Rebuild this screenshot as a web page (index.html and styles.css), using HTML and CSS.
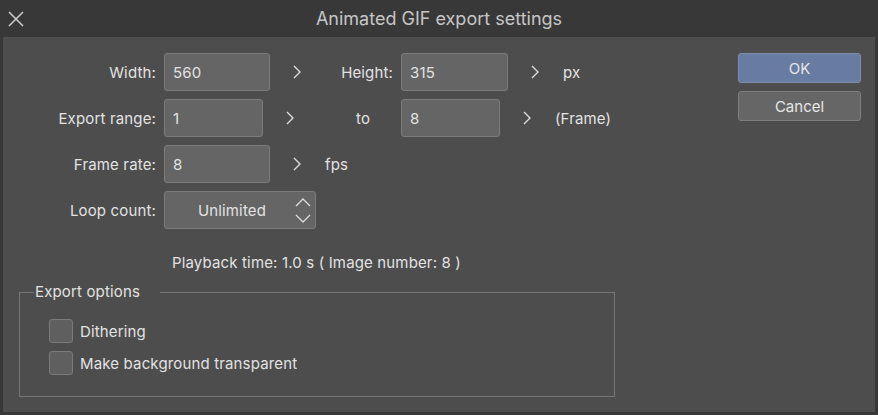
FILE: index.html
```html
<!DOCTYPE html>
<html>
<head>
<meta charset="utf-8">
<link rel="stylesheet" href="styles.css">
</head>
<body>
<div class="dialog">
  <div class="titlebar">
    <button class="close" aria-label="Close">
      <svg width="16" height="16" viewBox="0 0 16 16"><path d="M1 1 L15 15 M15 1 L1 15" stroke="#cfcfcf" stroke-width="1.5" fill="none"/></svg>
    </button>
    <div class="title">Animated GIF export settings</div>
  </div>
  <div class="panel">
    <div class="main">
      <div class="form">
        <div class="lbl">Width:</div>
        <div class="field"><div class="input w106">560</div><svg class="chev" width="8" height="14" viewBox="0 0 8 14"><path d="M1 1 L7 7 L1 13" stroke="#dcdcdc" stroke-width="1.4" fill="none"/></svg></div>
        <div class="lbl">Height:</div>
        <div class="field"><div class="input w107">315</div><svg class="chev" width="8" height="14" viewBox="0 0 8 14"><path d="M1 1 L7 7 L1 13" stroke="#dcdcdc" stroke-width="1.4" fill="none"/></svg><span class="unit">px</span></div>

        <div class="lbl">Export range:</div>
        <div class="field"><div class="input w99">1</div><svg class="chev" width="8" height="14" viewBox="0 0 8 14"><path d="M1 1 L7 7 L1 13" stroke="#dcdcdc" stroke-width="1.4" fill="none"/></svg></div>
        <div class="lbl center">to</div>
        <div class="field"><div class="input w99">8</div><svg class="chev" width="8" height="14" viewBox="0 0 8 14"><path d="M1 1 L7 7 L1 13" stroke="#dcdcdc" stroke-width="1.4" fill="none"/></svg><span class="unit">(Frame)</span></div>

        <div class="lbl">Frame rate:</div>
        <div class="field span3"><div class="input w106">8</div><svg class="chev" width="8" height="14" viewBox="0 0 8 14"><path d="M1 1 L7 7 L1 13" stroke="#dcdcdc" stroke-width="1.4" fill="none"/></svg><span class="unit">fps</span></div>

        <div class="lbl">Loop count:</div>
        <div class="field span3">
          <div class="select">
            <span class="sel-text">Unlimited</span>
            <span class="spin">
              <svg width="16" height="9" viewBox="0 0 16 9"><path d="M1 8 L8 1 L15 8" stroke="#dcdcdc" stroke-width="1.3" fill="none"/></svg>
              <svg width="16" height="9" viewBox="0 0 16 9"><path d="M1 1 L8 8 L15 1" stroke="#dcdcdc" stroke-width="1.3" fill="none"/></svg>
            </span>
          </div>
        </div>
      </div>
      <div class="playback">Playback time: 1.0 s ( Image number: 8 )</div>
      <fieldset class="group">
        <legend>Export options</legend>
        <label class="check"><span class="box"></span>Dithering</label>
        <label class="check"><span class="box"></span>Make background transparent</label>
      </fieldset>
    </div>
    <div class="buttons">
      <button class="btn ok">OK</button>
      <button class="btn">Cancel</button>
    </div>
  </div>
</div>
</body>
</html>
```
FILE: styles.css
```css
* { box-sizing: border-box; }
html, body {
  margin: 0;
  padding: 0;
  background: #383838;
}
body {
  font-family: Inter, "Noto Sans", sans-serif;
  font-size: 15px;
  letter-spacing: 0.15px;
  color: #e2e2e2;
  width: 878px;
  height: 415px;
  overflow: hidden;
}
.dialog {
  display: flex;
  flex-direction: column;
  height: 415px;
  padding: 0 3px 3px 3px;
}
.titlebar {
  height: 37px;
  display: flex;
  align-items: center;
  position: relative;
  margin: 0 -3px;
}
.close {
  background: none;
  border: 0;
  padding: 0;
  margin-left: 8px;
  width: 16px;
  height: 16px;
  display: flex;
}
.title {
  position: absolute;
  left: 0;
  right: 0;
  top: 0;
  line-height: 37px;
  text-align: center;
  font-size: 18px;
  letter-spacing: 0;
  color: #c6c6c6;
  pointer-events: none;
}
.panel {
  flex: 1;
  background: #4d4d4d;
  display: flex;
  padding: 16px 14px 0 16px;
}
.main {
  flex: 1;
}
.form {
  display: grid;
  grid-template-columns: 137px 161px 60px auto;
  grid-auto-rows: 38px;
  column-gap: 8px;
  row-gap: 8px;
  align-items: center;
}
.lbl {
  text-align: right;
  white-space: nowrap;
}
.lbl.center { text-align: center; }
.field {
  display: flex;
  align-items: center;
  height: 38px;
}
.span3 { grid-column: span 3; }
.input {
  height: 38px;
  background: #656565;
  border: 1px solid #7c7c7c;
  border-radius: 3px;
  padding-left: 8px;
  display: flex;
  align-items: center;
}
.w106 { width: 106px; }
.w107 { width: 107px; }
.w99 { width: 99px; }
.chev { margin-left: 23px; flex: none; }
.unit { margin-left: 24px; }
.select {
  width: 152px;
  height: 38px;
  background: #656565;
  border: 1px solid #7c7c7c;
  border-radius: 3px;
  display: flex;
  align-items: center;
  padding-right: 4px;
}
.sel-text {
  flex: 1;
  text-align: center;
  padding-left: 4px;
}
.spin {
  display: flex;
  flex-direction: column;
  gap: 7px;
}
.playback {
  margin-top: 25px;
  margin-left: 153px;
  height: 18px;
  line-height: 18px;
}
.group {
  margin: 11px 0 0 0;
  width: 596px;
  height: 114px;
  border: 1px solid #767676;
  padding: 18px 0 0 29px;
  min-width: 0;
}
.group legend {
  margin-left: -15px;
  padding: 0 20px 0 1px;
  line-height: 18px;
}
.check {
  display: flex;
  align-items: center;
  gap: 7px;
  height: 24px;
  margin-bottom: 8px;
}
.box {
  width: 24px;
  height: 24px;
  background: #5f5f5f;
  border: 1px solid #7a7a7a;
  border-radius: 3px;
}
.buttons {
  width: 123px;
  display: flex;
  flex-direction: column;
  gap: 8px;
}
.btn {
  height: 30px;
  font-family: inherit;
  font-size: 15px;
  color: #e6e6e6;
  background: #666666;
  border: 1px solid #7e7e7e;
  border-radius: 3px;
  padding: 0;
}
.btn.ok {
  background: #687ba0;
  border-color: #7d8db0;
}
```
